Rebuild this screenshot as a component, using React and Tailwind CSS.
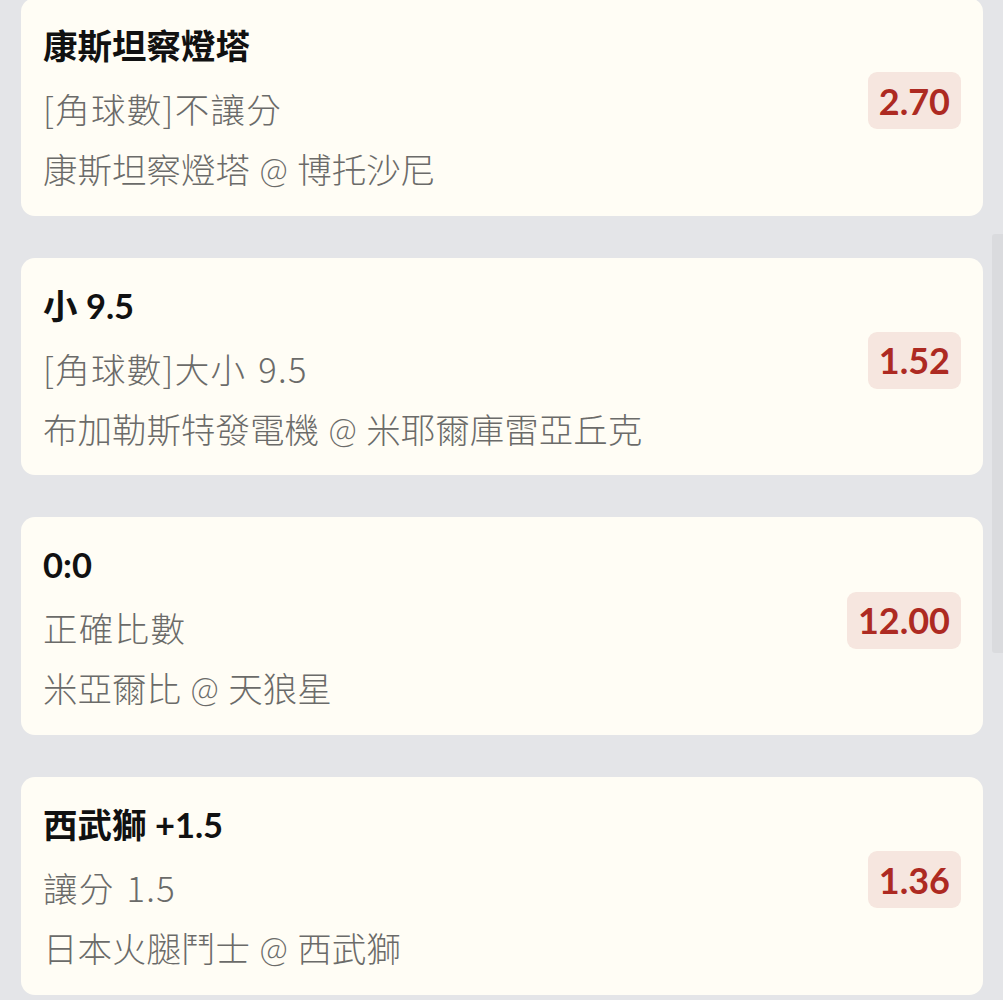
const bets = [
  { title: '康斯坦察燈塔', market: '[角球數]不讓分', match: '康斯坦察燈塔 @ 博托沙尼', odds: '2.70' },
  { title: '小 9.5', market: '[角球數]大小 9.5', match: '布加勒斯特發電機 @ 米耶爾庫雷亞丘克', odds: '1.52' },
  { title: '0:0', market: '正確比數', match: '米亞爾比 @ 天狼星', odds: '12.00' },
  { title: '西武獅 +1.5', market: '讓分 1.5', match: '日本火腿鬥士 @ 西武獅', odds: '1.36' },
]

function BetCard({ bet }) {
  return (
    <div className="flex h-[217.67px] shrink-0 items-center justify-between rounded-[14px] bg-[#fffdf5] pl-[22px] pr-[22px]">
      <div className="flex flex-col pt-[17px] pb-[14px] self-stretch">
        <div className="text-[34.5px] leading-[62px] font-bold text-[#111111] font-['Lato','Noto_Sans_CJK_TC',sans-serif]">
          {bet.title}
        </div>
        <div className="text-[34.5px] leading-[62px] font-light text-[#6b6b69] tracking-[1.3px] [word-spacing:3px] font-['Noto_Sans_CJK_TC',sans-serif]">
          {bet.market}
        </div>
        <div className="text-[34.5px] leading-[62px] font-light text-[#6b6b69] font-['Lato','Noto_Sans_CJK_TC',sans-serif]">
          {bet.match}
        </div>
      </div>
      <div className="mb-3 rounded-[9px] bg-[#f6e6df] px-[11px] h-[57px] flex items-center text-[36px] font-bold text-[#ad2a22] font-['Lato',sans-serif]">
        {bet.odds}
      </div>
    </div>
  )
}

export default function App() {
  return (
    <div className="relative min-h-[1000px] overflow-hidden bg-[#e4e5e8]">
      <div className="-mt-[2px] flex flex-col gap-[42px] pl-[21px] pr-[20px]">
        {bets.map((b) => (
          <BetCard key={b.title} bet={b} />
        ))}
      </div>
      {/* scrollbar */}
      <div className="absolute right-0 top-[234px] h-[419px] w-[11px] rounded-l-[3px] bg-[#dadbde]" />
    </div>
  )
}
